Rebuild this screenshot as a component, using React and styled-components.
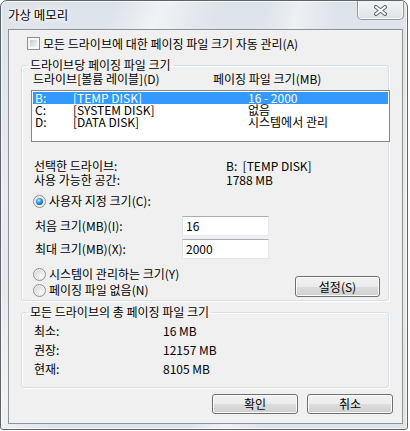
import React from "react";
import styled, { createGlobalStyle } from "styled-components";

const GlobalStyle = createGlobalStyle`
  html, body {
    margin: 0;
    padding: 0;
    background: #ffffff;
  }
  body {
    font-family: "Noto Sans CJK KR", "Noto Sans", sans-serif;
    font-size: 12px;
    color: #000000;
  }
`;

const drives = [
  { letter: "B:", label: "[TEMP DISK]", size: "16 - 2000", selected: true },
  { letter: "C:", label: "[SYSTEM DISK]", size: "없음" },
  { letter: "D:", label: "[DATA DISK]", size: "시스템에서 관리" },
];

const totals = [
  { label: "최소:", value: "16 MB" },
  { label: "권장:", value: "12157 MB" },
  { label: "현재:", value: "8105 MB" },
];

const App = () => {
  return (
    <>
      <GlobalStyle />
      <Window>
        <TitleBar>
          <Title>가상 메모리</Title>
          <CloseButton>
            <svg width="13" height="11" viewBox="0 0 13 11">
              <path d="M2 2 L11 9 M11 2 L2 9" stroke="#5f6670" strokeWidth="4" strokeLinecap="round" />
              <path d="M2 2 L11 9 M11 2 L2 9" stroke="#ffffff" strokeWidth="2" strokeLinecap="round" />
            </svg>
          </CloseButton>
        </TitleBar>

        <Client>
          <CheckRow>
            <CheckBox />
            <span>모든 드라이브에 대한 페이징 파일 크기 자동 관리(A)</span>
          </CheckRow>

          <Group $top={8}>
            <Legend>드라이브당 페이징 파일 크기</Legend>
            <GroupBody $bottom={3}>
              <ColumnHeader>
                <span>드라이브[볼륨 레이블](D)</span>
                <span>페이징 파일 크기(MB)</span>
              </ColumnHeader>

              <ListBox>
                {drives.map((d) => (
                  <ListRow key={d.letter} $selected={d.selected}>
                    <span>{d.letter}</span>
                    <span>{d.label}</span>
                    <span>{d.size}</span>
                  </ListRow>
                ))}
              </ListBox>

              <InfoGrid>
                <span>선택한 드라이브:</span>
                <span>B:&nbsp; [TEMP DISK]</span>
                <span>사용 가능한 공간:</span>
                <span>1788 MB</span>
              </InfoGrid>

              <RadioRow $top={7}>
                <Radio $checked />
                <span>사용자 지정 크기(C):</span>
              </RadioRow>

              <SizeRow $top={8} $lift={3}>
                <SizeLabel>처음 크기(MB)(I):</SizeLabel>
                <TextBox>16</TextBox>
              </SizeRow>
              <SizeRow $top={3}>
                <SizeLabel>최대 크기(MB)(X):</SizeLabel>
                <TextBox>2000</TextBox>
              </SizeRow>

              <BottomRow>
                <RadioColumn>
                  <RadioRow>
                    <Radio />
                    <span>시스템이 관리하는 크기(Y)</span>
                  </RadioRow>
                  <RadioRow>
                    <Radio />
                    <span>페이징 파일 없음(N)</span>
                  </RadioRow>
                </RadioColumn>
                <SetButton>설정(S)</SetButton>
              </BottomRow>
            </GroupBody>
          </Group>

          <Group $top={4}>
            <Legend>모든 드라이브의 총 페이징 파일 크기</Legend>
            <TotalsGrid>
              {totals.map((t) => (
                <React.Fragment key={t.label}>
                  <span>{t.label}</span>
                  <span>{t.value}</span>
                </React.Fragment>
              ))}
            </TotalsGrid>
          </Group>

          <ButtonRow>
            <DialogButton>확인</DialogButton>
            <DialogButton>취소</DialogButton>
          </ButtonRow>
        </Client>
      </Window>
    </>
  );
};

export default App;

const Window = styled.div`
  width: 408px;
  height: 430px;
  box-sizing: border-box;
  display: flex;
  flex-direction: column;
  border: 1px solid #5b636d;
  border-radius: 7px 7px 3px 3px;
  background:
    linear-gradient(112deg, transparent 20%, rgba(255, 255, 255, 0.55) 28%, transparent 38%),
    linear-gradient(100deg, transparent 55%, rgba(255, 255, 255, 0.45) 62%, transparent 70%),
    linear-gradient(180deg, #dde3ea 0%, #e8ecf0 45%, #dfe4ea 100%);
  box-shadow: inset 0 0 0 1px rgba(255, 255, 255, 0.75);
  overflow: hidden;
`;

const TitleBar = styled.div`
  height: 28px;
  flex: none;
  display: flex;
  justify-content: space-between;
  align-items: flex-start;
  padding-left: 7px;
`;

const Title = styled.div`
  margin-top: 6px;
  font-size: 12.5px;
  line-height: 16px;
  color: #000000;
  text-shadow: 0 0 6px #ffffff, 0 0 3px #ffffff, 0 0 10px #ffffff;
`;

const CloseButton = styled.div`
  width: 47px;
  height: 20px;
  box-sizing: border-box;
  margin: -1px 3px 0 0;
  display: flex;
  align-items: center;
  justify-content: center;
  padding-top: 2px;
  border: 1px solid #8d98a4;
  border-top: none;
  border-radius: 0 0 5px 5px;
  background: linear-gradient(180deg, #f3f5f7 0%, #e9edf1 50%, #dde2e8 100%);
  box-shadow: inset 0 0 0 1px rgba(255, 255, 255, 0.7);
`;

const Client = styled.div`
  flex: 1;
  margin: 0 4px 5px 7px;
  display: flex;
  flex-direction: column;
  padding-top: 7px;
  border: 1px solid #8d939b;
  background: #f0f0f0;
`;

const CheckRow = styled.div`
  display: flex;
  align-items: center;
  gap: 3px;
  height: 13px;
  padding-left: 18px;
  line-height: 13px;
`;

const CheckBox = styled.span`
  width: 13px;
  height: 13px;
  box-sizing: border-box;
  padding: 2px;
  border: 1px solid #8e8f8f;
  background: linear-gradient(135deg, #c6c9ce 0%, #e4e5e7 60%, #f4f4f4 100%) content-box, #f7f7f7;
`;

const Group = styled.fieldset`
  margin: ${(p) => p.$top}px 13px 0 12px;
  padding: 0;
  min-width: 0;
  border: 1px solid #d5dfe5;
  border-radius: 3px;
  box-shadow: inset 1px 1px 0 #ffffff, 1px 1px 0 #ffffff;
`;

const Legend = styled.legend`
  margin-left: 6px;
  padding: 0 2px;
  line-height: 14px;
`;

const GroupBody = styled.div`
  padding-bottom: ${(p) => p.$bottom}px;
`;

const ColumnHeader = styled.div`
  display: flex;
  padding-left: 11px;
  line-height: 14px;

  span:first-child {
    width: 180px;
  }
`;

const ListBox = styled.div`
  height: 52px;
  box-sizing: border-box;
  margin: 4px -2px 0 9px;
  padding: 1px;
  border: 1px solid #828790;
  background: #ffffff;
`;

const ListRow = styled.div`
  display: grid;
  grid-template-columns: 38px 175px 1fr;
  height: 12px;
  padding-left: 2px;
  line-height: 12px;
  white-space: nowrap;
  background: ${(p) => (p.$selected ? "#3399ff" : "transparent")};
  color: ${(p) => (p.$selected ? "#ffffff" : "#000000")};
`;

const InfoGrid = styled.div`
  display: grid;
  grid-template-columns: 192px 1fr;
  margin-top: 17px;
  padding-left: 12px;
  line-height: 14px;
`;

const RadioRow = styled.div`
  display: flex;
  align-items: center;
  gap: 3px;
  height: 14px;
  margin-top: ${(p) => p.$top || 0}px;
  padding-left: 11px;
  line-height: 14px;
`;

const Radio = styled.span`
  position: relative;
  width: 13px;
  height: 13px;
  box-sizing: border-box;
  border: 1px solid #8e8f8f;
  border-radius: 50%;
  background: radial-gradient(circle at 65% 65%, #f6f6f6 0%, #dcdcdc 70%, #cfcfcf 100%);
  box-shadow: inset 0 0 0 1px #f4f4f4;

  &::after {
    content: "";
    display: ${(p) => (p.$checked ? "block" : "none")};
    position: absolute;
    left: 2px;
    top: 2px;
    width: 7px;
    height: 7px;
    border-radius: 50%;
    background: radial-gradient(circle at 40% 35%, #b8ecff 0%, #3fa4ec 35%, #0d5cb7 75%, #09407f 100%);
  }
`;

const SizeRow = styled.div`
  display: flex;
  align-items: flex-start;
  margin-top: ${(p) => p.$top}px;
  padding-left: 13px;
`;

const SizeLabel = styled.span`
  width: 147px;
  line-height: 14px;
  padding-top: 3px;
`;

const TextBox = styled.div`
  width: 87px;
  height: 20px;
  box-sizing: border-box;
  padding-left: 3px;
  border: 1px solid;
  border-color: #abadb3 #e3e9ef #e3e9ef #e2e3ea;
  background: #ffffff;
  line-height: 18px;
`;

const BottomRow = styled.div`
  display: flex;
  align-items: flex-end;
  margin-top: 8px;
`;

const RadioColumn = styled.div`
  display: flex;
  flex-direction: column;
  gap: 2px;
`;

const Win7Button = styled.div`
  height: 20px;
  box-sizing: border-box;
  display: flex;
  align-items: center;
  justify-content: center;
  border: 1px solid #707070;
  border-radius: 3px;
  background: linear-gradient(180deg, #f2f2f2 0%, #ebebeb 50%, #dddddd 51%, #cfcfcf 100%);
  box-shadow: inset 0 0 0 1px #fcfcfc;
  line-height: 14px;
`;

const SetButton = styled(Win7Button)`
  width: 85px;
  height: 21px;
  margin: 0 8px 0 auto;
`;

const TotalsGrid = styled.div`
  display: grid;
  grid-template-columns: 129px 1fr;
  padding: 2px 0 9px 12px;
  line-height: 19px;
`;

const ButtonRow = styled.div`
  display: flex;
  justify-content: flex-end;
  gap: 9px;
  margin-top: 6px;
  padding-right: 9px;
`;

const DialogButton = styled(Win7Button)`
  width: 86px;
`;
